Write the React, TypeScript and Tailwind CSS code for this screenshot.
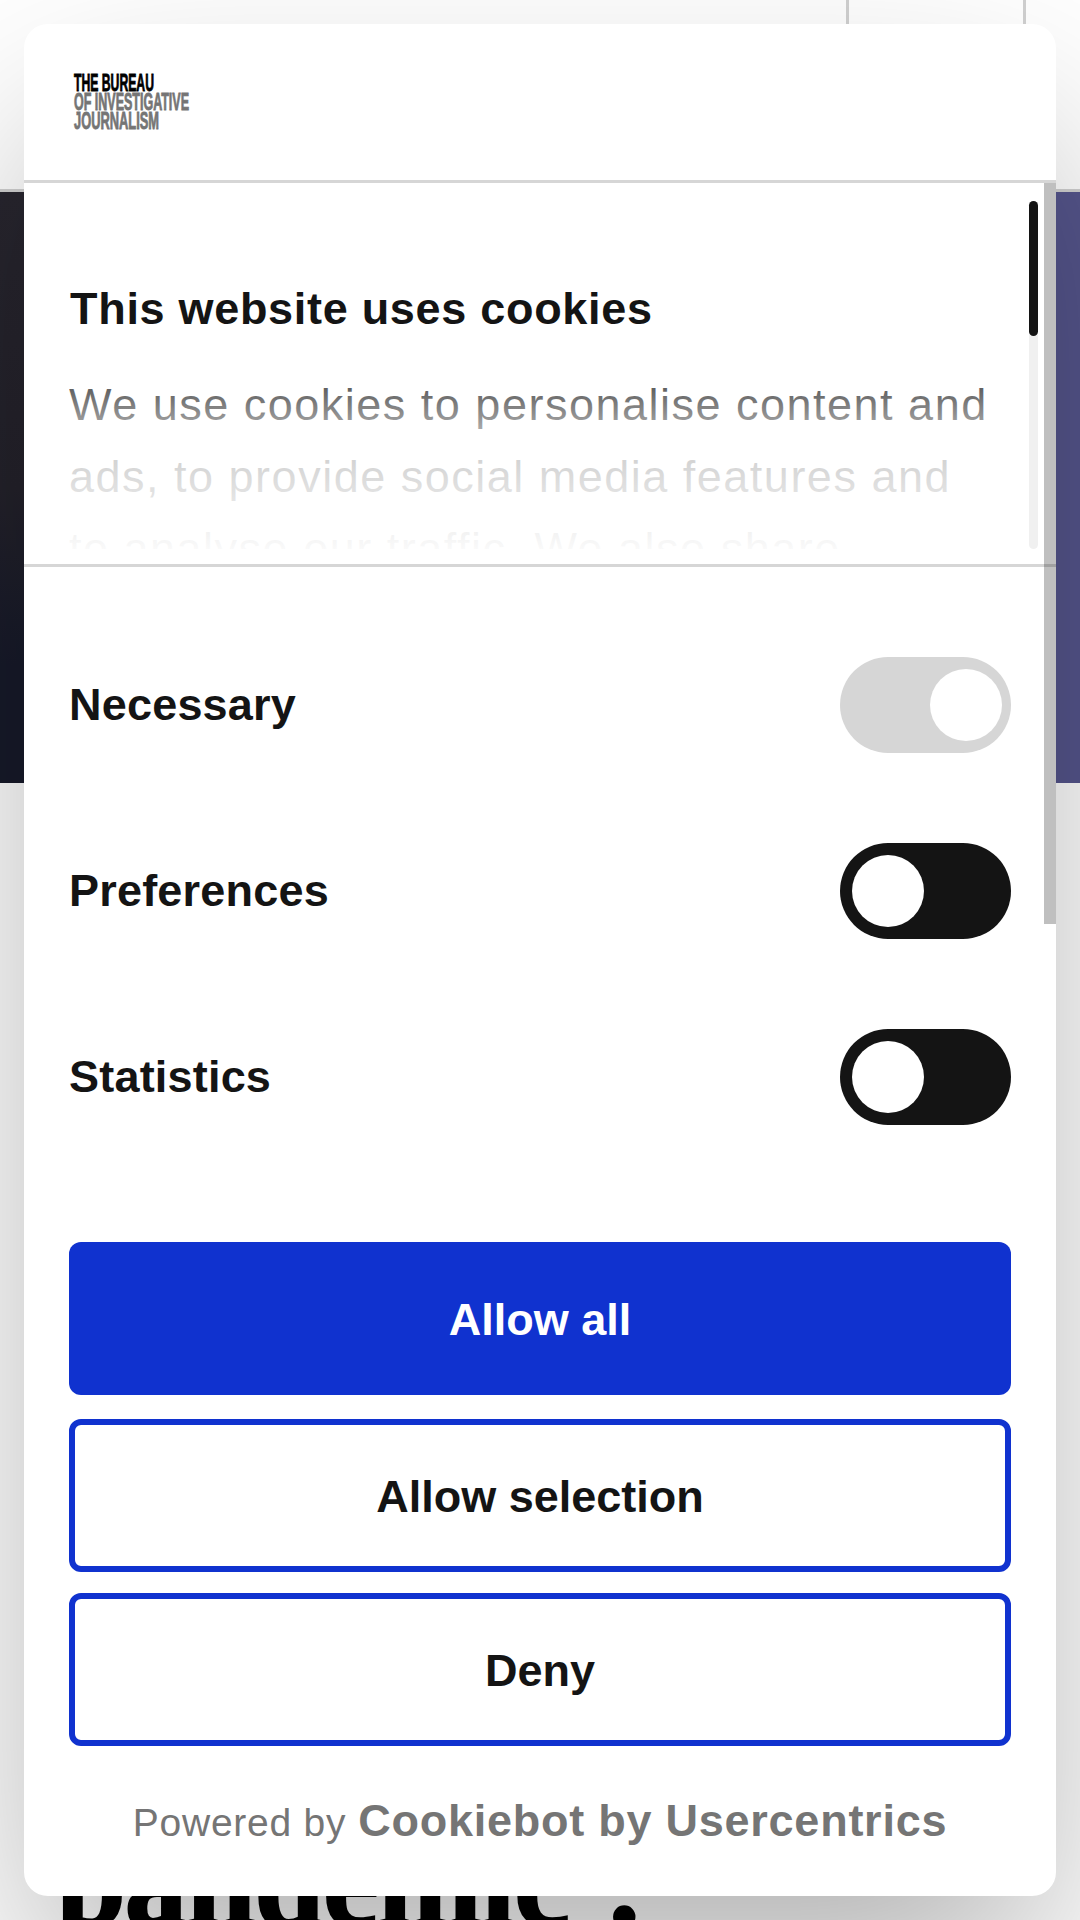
const ARIAL = "font-['Liberation_Sans',Arial,sans-serif]";

function Logo() {
  const line = { fontFamily: "'Liberation Sans', Arial, sans-serif", fontWeight: 700 };
  return (
    <svg width="120" height="62" viewBox="0 0 120 62" className="block" aria-label="The Bureau of Investigative Journalism">
      <g fontSize="24.4" strokeWidth="0.9" {...line}>
        <text x="1" y="18.8" textLength="80" lengthAdjust="spacingAndGlyphs" fill="#000" stroke="#000">
          THE BUREAU
        </text>
        <text x="1" y="38" textLength="115" lengthAdjust="spacingAndGlyphs" fill="#757575" stroke="#757575">
          OF INVESTIGATIVE
        </text>
        <text x="1" y="57.2" textLength="85" lengthAdjust="spacingAndGlyphs" fill="#757575" stroke="#757575">
          JOURNALISM
        </text>
      </g>
    </svg>
  );
}

function Toggle({ locked = false }: { locked?: boolean }) {
  return (
    <span
      className={
        locked
          ? "flex h-24 w-[171px] items-center justify-end rounded-full bg-[#d6d6d6] pr-[9px]"
          : "flex h-24 w-[171px] items-center rounded-full bg-[#141414] pl-3"
      }
    >
      <span className="size-[72px] rounded-full bg-white" />
    </span>
  );
}

function ConsentRow({ label, locked }: { label: string; locked?: boolean }) {
  return (
    <div className="flex h-[186px] items-center justify-between">
      <span className="text-[45px] leading-[54px] font-bold tracking-[0.2px] text-[#141414]">{label}</span>
      <Toggle locked={locked} />
    </div>
  );
}

function PageBehind() {
  return (
    <div className="flex h-full flex-col bg-white">
      <div className="flex h-48 shrink-0 justify-end border-b-[3px] border-[#d1d1d1]">
        <div className="w-[180px] border-x-[3px] border-[#d1d1d1]" />
        <div className="w-[54px]" />
      </div>
      <div className="flex h-[591px] shrink-0 justify-between">
        <div className="w-1/2 bg-linear-to-b from-[#28262f] via-[#24222b] via-50% to-[#171a2a] to-80%" />
        <div className="w-1/2 bg-[#55558c]" />
      </div>
      <div className="flex grow items-end px-[56px]">
        <h1 className="h-[92px] font-['Liberation_Serif',serif] text-[126px] leading-[110px] font-bold tracking-[-1.6px] whitespace-nowrap text-black [-webkit-text-stroke:2px_black]">
          pandemic’.
        </h1>
      </div>
    </div>
  );
}

function CookieDialog() {
  return (
    <section className="flex h-[1872px] w-[1032px] flex-col overflow-hidden rounded-[24px] bg-white shadow-[0_96px_204px_-14px_rgba(0,0,0,0.31)]">
      <header className="h-[159px] shrink-0 border-b-[3px] border-[#d6d6d6] pt-[48px] pl-[49px]">
        <Logo />
      </header>

      <div className="relative h-[1059px] shrink-0">
        <div className="flex h-[384px] border-b-[3px] border-[#d6d6d6] pt-[18px] pr-[18px] pb-[15px] pl-[45px]">
          <div className="relative w-[960px] overflow-hidden pt-[81px]">
            <h2 className="pl-px text-[45px] leading-[54px] font-bold tracking-[0.7px] text-[#141414]">This website uses cookies</h2>
            <p className="mt-[33px] w-[930px] text-[45px] leading-[72px] tracking-[1.5px] text-[#141414]">
              We use cookies to personalise content and ads, to provide social media features and to analyse our traffic. We also share
            </p>
            <div className="absolute inset-x-0 top-[144px] bottom-0 bg-[linear-gradient(180deg,rgba(255,255,255,0)_0%,rgba(255,255,255,0.8)_52%,#fff_106%)]" />
          </div>
          <div className="h-[348px] w-[9px] rounded-full bg-[#f0f0f0]">
            <div className="h-[135px] rounded-full bg-[#141414]" />
          </div>
        </div>

        <div className="px-[45px] pt-[45px]">
          <ConsentRow label="Necessary" locked />
          <ConsentRow label="Preferences" />
          <ConsentRow label="Statistics" />
        </div>

        <div className="absolute top-0 right-0 h-[741px] w-3 bg-black/25" />
      </div>

      <div className="flex flex-col px-[45px] text-[45px] font-bold text-[#141414]">
        <button className="h-[153px] rounded-[12px] bg-[#1032cf] pt-[2px] text-white">Allow all</button>
        <button className="mt-6 h-[153px] rounded-[12px] border-[6px] border-[#1032cf] pt-[2px]">Allow selection</button>
        <button className="mt-[21px] h-[153px] rounded-[12px] border-[6px] border-[#1032cf] pt-[2px]">Deny</button>
      </div>

      <footer className="flex items-baseline justify-center gap-3 pt-[48px] text-[#757575]">
        <span className="text-[39px] tracking-[0.75px]">Powered by</span>
        <span className="text-[45px] leading-[54px] font-bold tracking-[0.75px]">Cookiebot by Usercentrics</span>
      </footer>
    </section>
  );
}

export default function App() {
  return (
    <main className={`${ARIAL} relative h-[1920px] w-[1080px] overflow-hidden`}>
      <PageBehind />
      <div className="absolute inset-0 flex items-center justify-center">
        <CookieDialog />
      </div>
    </main>
  );
}
